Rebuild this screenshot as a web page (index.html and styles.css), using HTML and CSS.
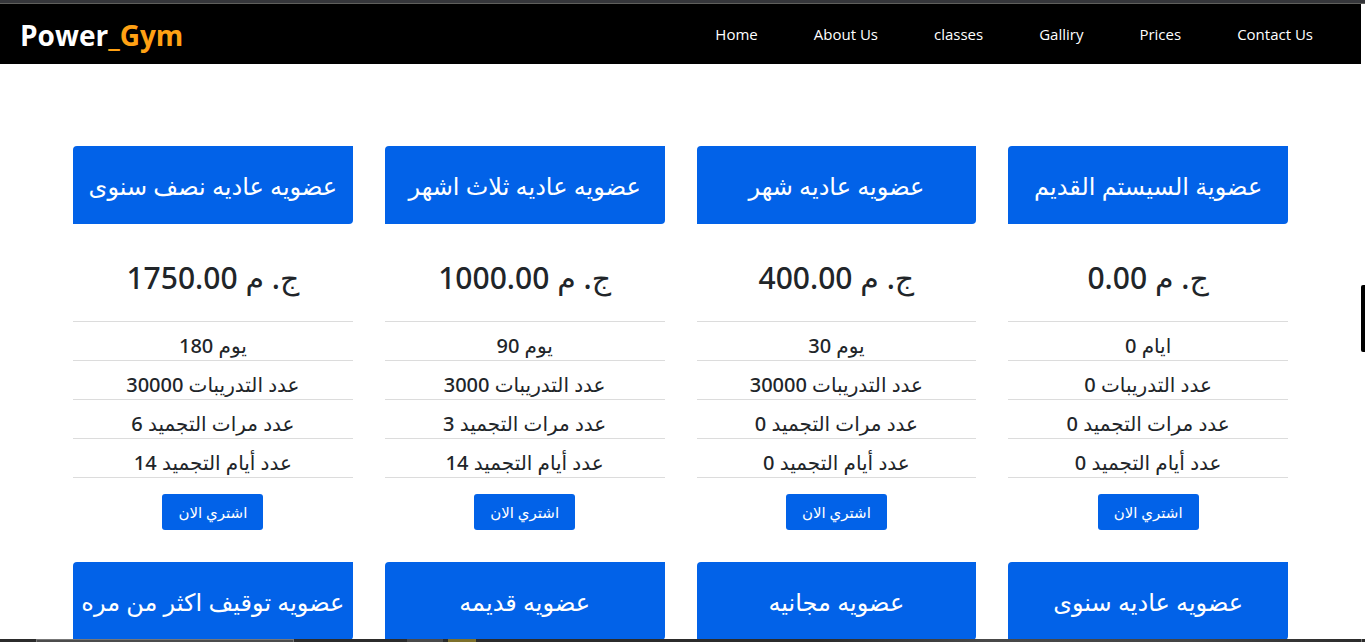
FILE: index.html
```html
<!DOCTYPE html>
<html lang="en">
<head>
<meta charset="utf-8">
<meta name="viewport" content="width=device-width, initial-scale=1">
<title>Power_Gym</title>
<link rel="stylesheet" href="styles.css">
</head>
<body>
<div class="window-edge"></div>
<div class="viewport">
  <div class="page">
    <header class="navbar">
      <a class="logo" href="#">Power<span class="logo-accent">_Gym</span></a>
      <nav class="menu">
        <a href="#home">Home</a>
        <a href="#about">About Us</a>
        <a href="#classes">classes</a>
        <a href="#gallery">Galliry</a>
        <a href="#prices">Prices</a>
        <a href="#contact">Contact Us</a>
      </nav>
    </header>
    <main class="plans" id="prices" lang="ar">
      <article class="plan">
        <h2 class="plan-name">عضويه عاديه نصف سنوى</h2>
        <p class="price">ج. م 1750.00</p>
        <ul class="features"><li>يوم 180</li><li>عدد التدريبات 30000</li><li>عدد مرات التجميد 6</li><li>عدد أيام التجميد 14</li></ul>
        <button class="buy" type="button">اشتري الان</button>
      </article>
      <article class="plan">
        <h2 class="plan-name">عضويه عاديه ثلاث اشهر</h2>
        <p class="price">ج. م 1000.00</p>
        <ul class="features"><li>يوم 90</li><li>عدد التدريبات 3000</li><li>عدد مرات التجميد 3</li><li>عدد أيام التجميد 14</li></ul>
        <button class="buy" type="button">اشتري الان</button>
      </article>
      <article class="plan">
        <h2 class="plan-name">عضويه عاديه شهر</h2>
        <p class="price">ج. م 400.00</p>
        <ul class="features"><li>يوم 30</li><li>عدد التدريبات 30000</li><li>عدد مرات التجميد 0</li><li>عدد أيام التجميد 0</li></ul>
        <button class="buy" type="button">اشتري الان</button>
      </article>
      <article class="plan">
        <h2 class="plan-name">عضوية السيستم القديم</h2>
        <p class="price">ج. م 0.00</p>
        <ul class="features"><li>ايام 0</li><li>عدد التدريبات 0</li><li>عدد مرات التجميد 0</li><li>عدد أيام التجميد 0</li></ul>
        <button class="buy" type="button">اشتري الان</button>
      </article>
      <article class="plan"><h2 class="plan-name">عضويه توقيف اكثر من مره</h2></article>
      <article class="plan"><h2 class="plan-name">عضويه قديمه</h2></article>
      <article class="plan"><h2 class="plan-name">عضويه مجانيه</h2></article>
      <article class="plan"><h2 class="plan-name">عضويه عاديه سنوى</h2></article>
    </main>
  </div>
  <div class="scroll-track"><div class="scroll-thumb"></div></div>
</div>
<div class="taskbar">
  <span class="task-search"></span>
  <span class="task-item"></span>
  <span class="task-item task-folder"></span>
  <span class="task-rest"></span>
</div>
</body>
</html>
```

FILE: styles.css
```css
* { box-sizing: border-box; }

body {
  display: flex;
  flex-direction: column;
  height: 100vh;
  margin: 0;
  overflow: hidden;
  background: #fff;
  color: #212529;
  font-family: "Segoe UI", "Noto Sans", "DejaVu Sans", sans-serif;
}

.window-edge {
  flex: none;
  height: 4px;
  background: #35363a;
  border-bottom: 1px solid #5f5f5c;
}

.viewport {
  display: flex;
  flex: 1;
  min-height: 0;
}

.page {
  flex: 1;
  min-width: 0;
  overflow: hidden;
}

.navbar {
  display: flex;
  align-items: center;
  justify-content: space-between;
  height: 60px;
  padding: 0 48px 0 20px;
  background: #000;
}

.logo {
  padding-top: 2px;
  color: #fff;
  font-family: "Segoe UI", "Open Sans", sans-serif;
  font-size: 28px;
  font-weight: 700;
  line-height: 40px;
  text-decoration: none;
}

.logo-accent { color: #ffa114; }

.menu {
  display: flex;
  gap: 56px;
}

.menu a {
  color: #fff;
  font-family: "Segoe UI", "Open Sans", sans-serif;
  font-size: 15px;
  line-height: 24px;
  text-decoration: none;
}

.plans {
  display: grid;
  grid-template-columns: repeat(4, 1fr);
  gap: 32px;
  padding: 82px 73px 32px;
}

.plan { text-align: center; }

.plan-name {
  margin: 0;
  padding: 25px 0 23px;
  border-radius: 4px 0;
  background: #0262e8;
  color: #fff;
  font-size: 24px;
  font-weight: 500;
  line-height: 30px;
  white-space: nowrap;
}

.price {
  margin: 0;
  padding: 34px 0 23px;
  border-bottom: 1px solid #dcdcdc;
  font-size: 30px;
  font-weight: 500;
  line-height: 40px;
}

.features {
  margin: 0 0 16px;
  padding: 0;
  list-style: none;
}

.features li {
  padding: 11px 0 1px;
  border-bottom: 1px solid #dcdcdc;
  font-size: 20px;
  font-weight: 500;
  line-height: 26px;
}

.buy {
  height: 36px;
  padding: 0 16px;
  border: 0;
  border-radius: 3px;
  background: #0262e8;
  color: #fff;
  font: inherit;
  font-size: 15px;
}

.scroll-track {
  position: relative;
  flex: none;
  width: 4px;
  background: #fff;
}

.scroll-thumb {
  position: absolute;
  top: 281px;
  width: 100%;
  height: 67px;
  border-radius: 2px 0 0 2px;
  background: #000;
}

.taskbar {
  display: flex;
  flex: none;
  height: 3px;
  padding-left: 36px;
  background: #2b2b2b;
}

.task-search {
  width: 258px;
  margin-right: 113px;
  border: 1px solid #777;
  border-bottom: 0;
  background: #4c4c4c;
}

.task-item {
  width: 36px;
  margin-right: 5px;
  background: #4a4a4a;
}

.task-folder {
  width: 28px;
  margin-right: 204px;
  background: #7d702b;
}

.task-rest {
  flex: 1;
  margin-right: 3px;
  border-right: 1px solid #777;
  background: linear-gradient(90deg, #2b2b2b 20%, #484848 45%, #444 75%, #2b2b2b);
}
```
